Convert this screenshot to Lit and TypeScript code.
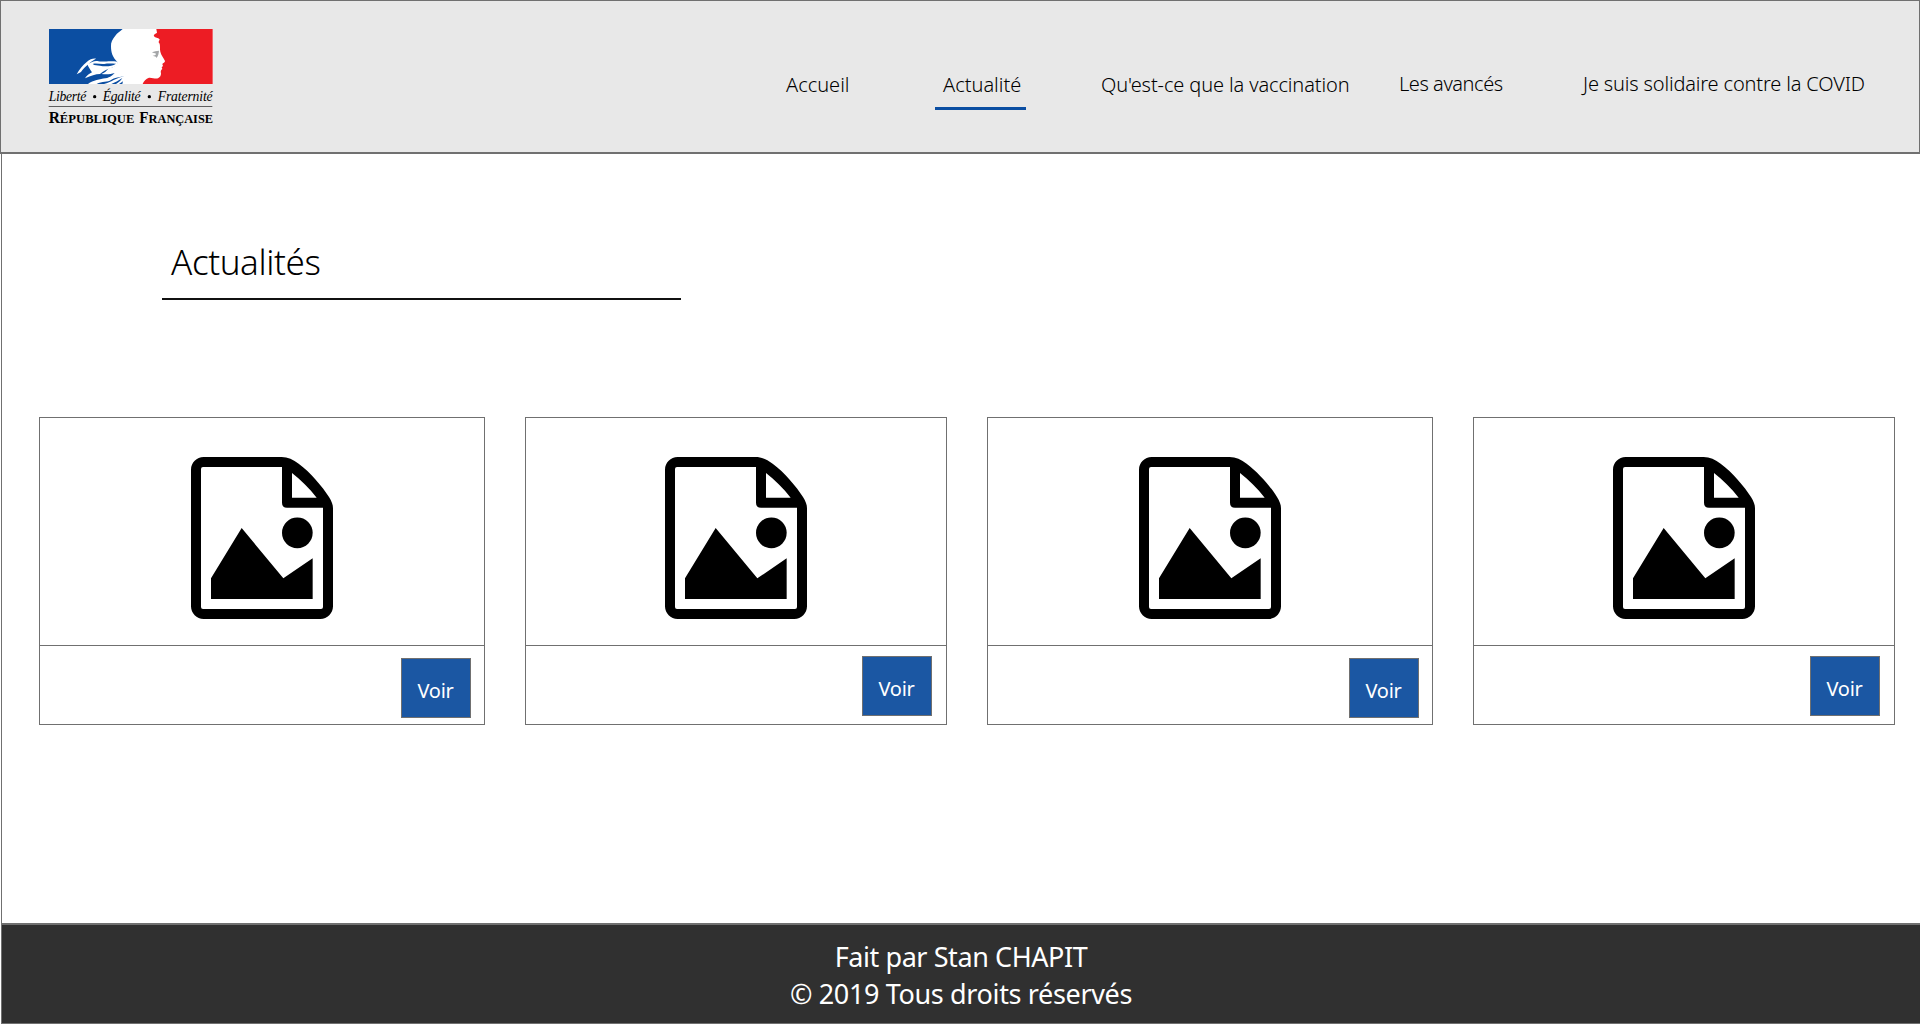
import { LitElement, html, css, svg } from "lit";
import { customElement, property } from "lit/decorators.js";
import { classMap } from "lit/directives/class-map.js";

@customElement("republic-logo")
export class RepublicLogo extends LitElement {
  static styles = css`
    :host { display: block; }
    .logo { display: block; width: 190px; height: 115px; overflow: visible; }
    .motto { font: italic 41px "Liberation Serif", "Times New Roman", serif; }
    .name { font: 700 49px "Liberation Serif", "Times New Roman", serif; }
    .caps { font-size: 40px; }
  `;

  render() {
    return html`<svg class="logo" viewBox="45 30 570 345" role="img">
      <rect x="57" y="42" width="491" height="165" fill="#fff"></rect>
      <path fill="#0b4ea2" d="M57 42H278C270 49 262 54 256 62C248 72 242 82 243 94C243 112 247 126 262 141V160C268 172 276 178 282 184L262 207H57Z"></path>
      <path fill="#fff" d="M140 178C148 163 158 151 171 140C180 133 188 130 198 131C189 136 182 140 176 147C166 155 158 163 153 171Z"></path>
      <path fill="#fff" d="M172 148C184 141 192 137 202 138C220 142 236 136 263 140L264 149C256 154 250 158 240 160C230 164 220 168 210 177C196 177 184 182 165 190C170 181 180 176 186 172C180 164 176 157 172 148Z"></path>
      <path fill="#0b4ea2" d="M188 147C198 144 210 148 223 147C235 144 246 146 258 146C246 154 226 156 210 152C202 151 194 152 188 147Z"></path>
      <path fill="#fff" d="M236 160C250 158 258 152 263 146L288 165L285 183C270 187 252 188 243 195C234 202 216 198 200 207H174C190 195 210 193 226 190C242 187 248 180 254 174C240 179 225 178 214 177C224 174 230 168 236 160Z"></path>
      <path fill="#fff" d="M222 207C244 201 258 190 281 183L290 207Z"></path>
      <path fill="#0b4ea2" d="M244 207C254 203 266 197 277 189C271 199 264 204 258 207ZM267 207C272 204 276 202 279 199L277 207Z"></path>
      <path fill="#ed1c24" d="M548 42H379L381 53C376 57 370 58 372 64C376 69 384 68 389 73C388 78 383 81 389 86C391 94 389 101 391 110C393 120 401 129 405 138C405 143 399 144 397 147L399 153L395 157L397 162C393 165 391 169 393 175C393 182 391 187 384 190C376 193 366 187 357 188C348 191 341 199 338 207H548Z"></path>
      <path fill="#a4a6a8" d="M366 112C373 108 379 108 387 107C386 115 385 124 379 129C379 124 374 124 368 122C375 121 378 119 378 116C374 114 370 115 366 112Z"></path>
      <text class="motto" x="56" y="257" textLength="113">Liberté</text>
      <circle cx="194" cy="245" r="5"></circle>
      <text class="motto" x="218" y="257" textLength="114">Égalité</text>
      <circle cx="358" cy="245" r="5"></circle>
      <text class="motto" x="383" y="257" textLength="165">Fraternité</text>
      <rect x="56" y="273" width="491" height="2.5" fill="#444"></rect>
      <text class="name" x="56" y="325" textLength="257" lengthAdjust="spacingAndGlyphs">R<tspan class="caps">ÉPUBLIQUE</tspan></text>
      <text class="name" x="328" y="325" textLength="221" lengthAdjust="spacingAndGlyphs">F<tspan class="caps">RANÇAISE</tspan></text>
    </svg>`;
  }
}

const fileImageIcon = svg`
  <path fill-rule="evenodd" d="M38 0H272C290 0 307 8 323 20C358 46 394 88 414 120C422 133 426 143 426 154V448C426 469 409 486 388 486H38C17 486 0 469 0 448V38C0 17 17 0 38 0ZM36 30Q30 30 30 36V450Q30 456 36 456H390Q396 456 396 450V152H288Q273 152 273 137V30ZM303 48V122H377C355 94 330 69 303 48Z"></path>
  <path d="M60 364L152 213L277 364L365 304V426H60Z"></path>
  <circle cx="319" cy="227.500" r="46"></circle>`;

@customElement("news-card")
export class NewsCard extends LitElement {
  @property({ type: Boolean }) narrow = false;

  static styles = css`
    :host { display: block; }
    .card { box-sizing: border-box; height: 308px; border: 1px solid #707070; display: flex; flex-direction: column; background: #fff; }
    .picture { height: 188px; padding-top: 39px; border-bottom: 1px solid #707070; display: flex; justify-content: center; align-items: flex-start; }
    .icon { width: 142px; height: 162px; display: block; }
    .actions { display: flex; justify-content: flex-end; padding: 12px 13px 0 0; }
    .narrow .actions { padding: 10px 14px 0 0; }
    .button { box-sizing: border-box; width: 70px; height: 60px; padding: 18px 1px 0 0; border: 1px solid #707070; background: #1b57a3; color: #fff; font: 400 20px/28px "Noto Sans", sans-serif; letter-spacing: -0.3px; text-align: center; display: block; }
  `;

  render() {
    return html`<article class=${classMap({ card: true, narrow: this.narrow })}>
      <div class="picture"><svg class="icon" viewBox="0 0 426 486">${fileImageIcon}</svg></div>
      <div class="actions"><a class="button">Voir</a></div>
    </article>`;
  }
}

const links = [
  { label: "Accueil", cls: "home" },
  { label: "Actualité", cls: "current" },
  { label: "Qu'est-ce que la vaccination", cls: "vaccine" },
  { label: "Les avancés", cls: "progress" },
  { label: "Je suis solidaire contre la COVID", cls: "covid" },
];

@customElement("app-root")
export class AppRoot extends LitElement {
  static styles = css`
    :host { display: block; font-family: "Noto Sans", "Open Sans", sans-serif; color: #000; }
    .page { height: 1024px; display: flex; flex-direction: column; background: #fff; overflow: hidden; }
    .header { box-sizing: border-box; height: 154px; flex: none; display: flex; justify-content: space-between; background: #e8e8e8; border: 1px solid #707070; border-bottom-width: 2px; }
    .logo { padding: 24px 0 0 44px; }
    .nav { display: grid; grid-template-columns: 157px 158px 298px 184px 336px; padding-top: 70px; height: 28px; font-weight: 300; font-size: 20px; line-height: 28px; white-space: nowrap; }
    .current { width: 91px; height: 39px; margin-left: -8px; padding-left: 8px; box-sizing: border-box; border-bottom: 3px solid #0b4ea2; }
    .vaccine { letter-spacing: -0.12px; }
    .progress { letter-spacing: -0.45px; margin-top: -1px; }
    .covid { letter-spacing: -0.16px; margin-top: -1px; }
    .main { flex: 1; border-left: 1px solid #707070; margin-left: 1px; }
    .title { width: 510px; height: 60px; margin: 84px 0 0 160px; padding-left: 9px; border-bottom: 2px solid #111; font-weight: 300; font-size: 35px; line-height: 48px; letter-spacing: -0.4px; }
    .cards { display: grid; grid-template-columns: 446px 422px 446px 422px; column-gap: 40px; margin: 117px 0 0 37px; }
    .footer { box-sizing: border-box; height: 101px; flex: none; margin-left: 1px; padding-top: 13px; background: #303030; border: 1px solid #707070; border-top-width: 2px; border-right: 0; color: #fff; text-align: center; font-size: 27px; line-height: 37px; }
    .author { letter-spacing: -0.42px; }
    .rights { letter-spacing: -0.35px; }
  `;

  render() {
    return html`<div class="page">
      <header class="header">
        <republic-logo class="logo"></republic-logo>
        <nav class="nav">${links.map((l) => html`<a class=${l.cls}>${l.label}</a>`)}</nav>
      </header>
      <main class="main">
        <h1 class="title">Actualités</h1>
        <section class="cards">
          ${[false, true, false, true].map((n) => html`<news-card .narrow=${n}></news-card>`)}
        </section>
      </main>
      <footer class="footer">
        <div class="author">Fait par Stan CHAPIT</div>
        <div class="rights">© 2019 Tous droits réservés</div>
      </footer>
    </div>`;
  }
}
